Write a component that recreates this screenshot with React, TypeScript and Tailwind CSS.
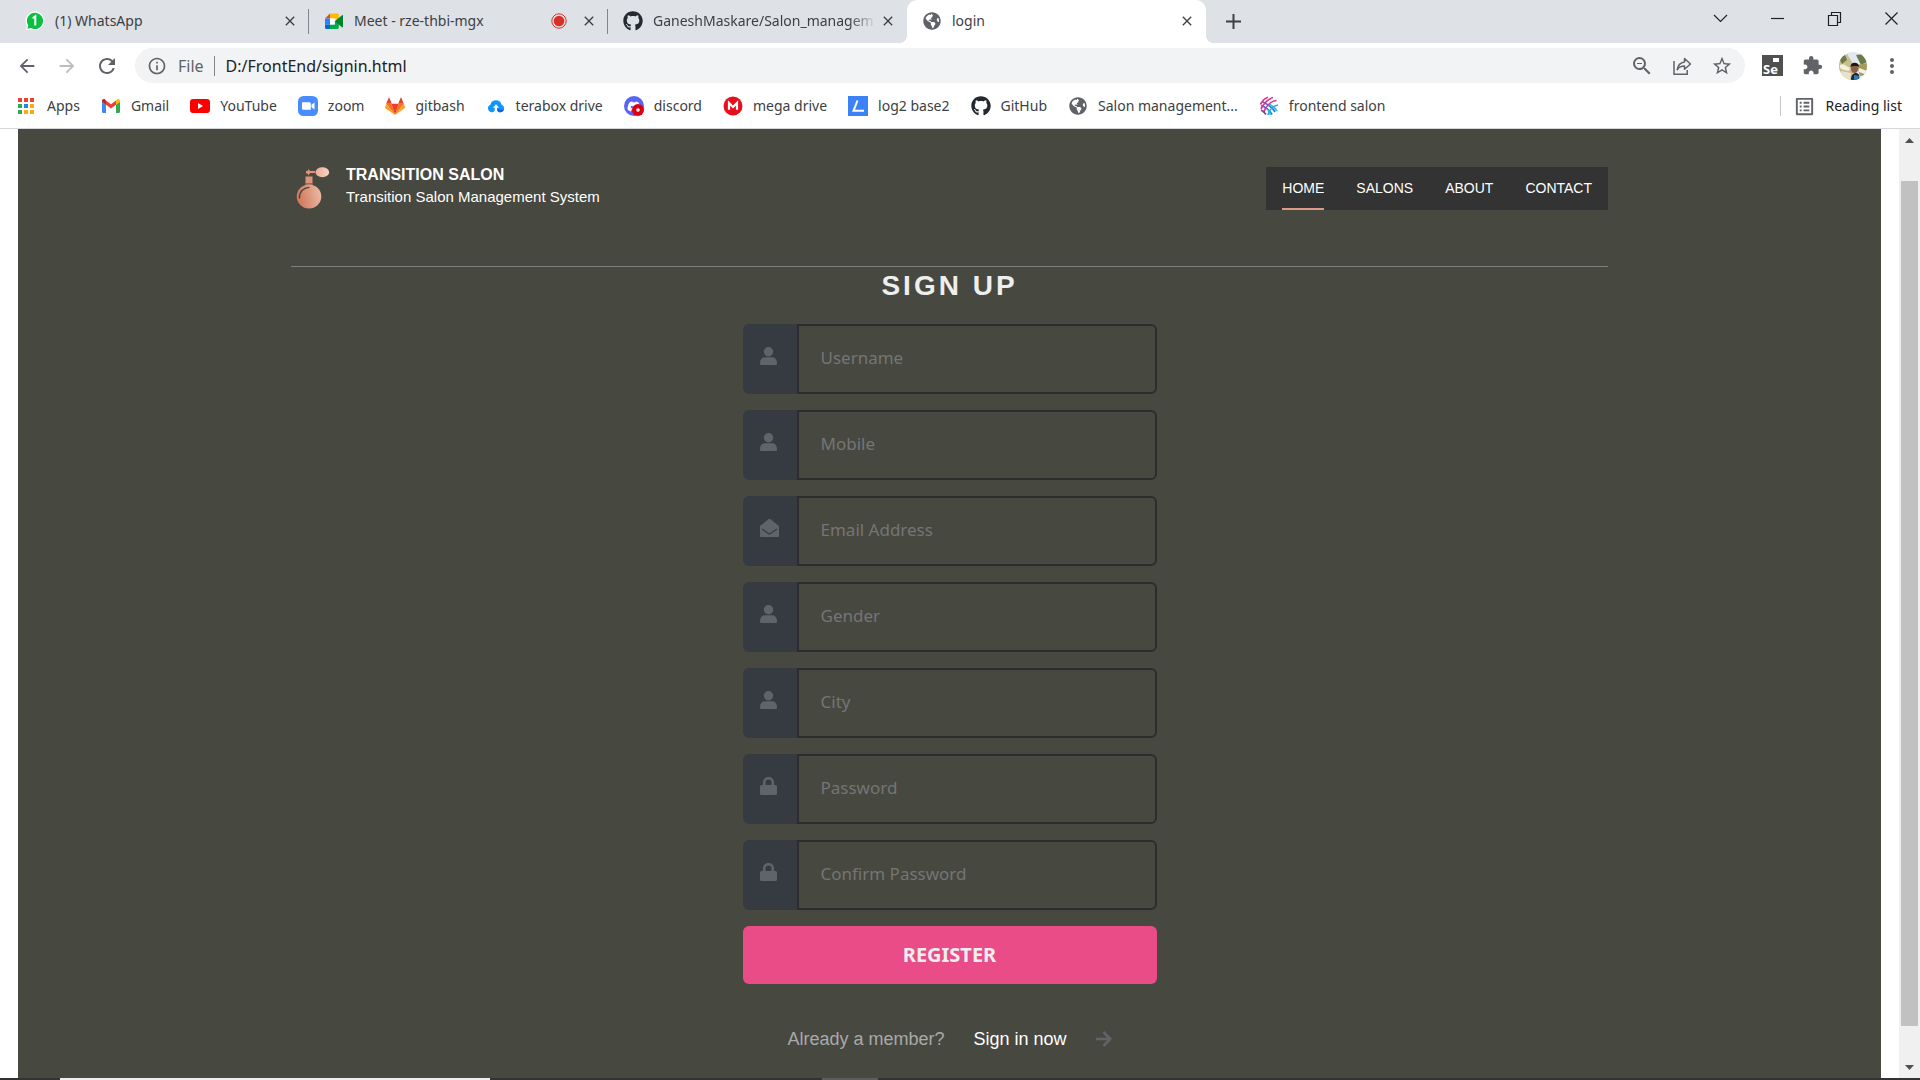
import type { ReactNode } from "react";
import {
  MdArrowBack,
  MdArrowForward,
  MdClose,
  MdExtension,
  MdInfoOutline,
  MdMoreVert,
  MdOutlineListAlt,
  MdRefresh,
  MdStarBorder,
  MdZoomOut,
} from "react-icons/md";
import { FaDiscord, FaGithub, FaGlobeAmericas } from "react-icons/fa";

/* ---------- favicons ---------- */

const WhatsAppIcon = () => (
  <svg viewBox="0 0 20 20" className="size-5">
    <path d="M10 .5a9.4 9.4 0 1 1-4.300 17.800L.6 19.600l1.300-4.900A9.400 9.400 0 0 1 10 .5z" fill="#fff" />
    <path d="M10 1.800a8.100 8.100 0 1 1-4.100 15.100l-3.500.9.900-3.400A8.100 8.100 0 0 1 10 1.800z" fill="#0cbf42" />
    <path d="M7.600 7.200 10.300 5.200v9.300" fill="none" stroke="#fff" strokeWidth="2" />
  </svg>
);

const MeetIcon = () => (
  <svg viewBox="0 0 20 20" className="size-5">
    <path d="M1 7.500 6 2.500v5z" fill="#ea4335" />
    <path d="M1 7.500h5v6H1z" fill="#2684fc" />
    <path d="M1 13.500h5v4.500H2.200C1.500 18 1 17.500 1 16.800z" fill="#0066da" />
    <path d="M6 2.500h7.500c.8 0 1.300.5 1.300 1.200V10l-4-2.500H6z" fill="#ffba00" />
    <path d="M6 13.500h4.800V10l4 0v6.800c0 .7-.5 1.200-1.300 1.200H6z" fill="#00ac47" />
    <path d="M10.800 10.200 18 4.200c.5-.4 1-.1 1 .5v11c0 .6-.5.900-1 .5z" fill="#00832d" />
    <path d="M6 7.500h4.800v6H6z" fill="#fff" />
  </svg>
);

const AppsIcon = () => {
  const colors = ["#ea4335", "#ea4335", "#ea4335", "#34a853", "#1e88e5", "#fbab05", "#34a853", "#fbab05", "#fbab05"];
  return (
    <svg viewBox="0 0 20 20" className="size-5">
      {colors.map((c, i) => (
        <rect key={i} x={1 + (i % 3) * 6} y={2 + Math.floor(i / 3) * 6} width="4" height="4" fill={c} />
      ))}
    </svg>
  );
};

const GmailIcon = () => (
  <svg viewBox="0 0 20 20" className="size-5">
    <path d="M1 5.500v10.300c0 .7.500 1.200 1.200 1.200H5V8.500z" fill="#4285f4" />
    <path d="M15 17h2.800c.7 0 1.200-.5 1.200-1.200V5.500l-4 3z" fill="#34a853" />
    <path d="M15 4.500v4.300l4-3V4.700c0-1.500-1.700-2.300-2.900-1.400z" fill="#fbbc04" />
    <path d="M5 8.800V4.500l5 3.800 5-3.800v4.300l-5 3.800z" fill="#ea4335" />
    <path d="M1 4.700v1.100l4 3V4.500L3.900 3.300C2.700 2.400 1 3.200 1 4.700z" fill="#c5221f" />
  </svg>
);

const YouTubeIcon = () => (
  <svg viewBox="0 0 20 20" className="size-5">
    <rect y="3" width="20" height="14" rx="3" fill="#f00" />
    <path d="M8 7v6l5-3z" fill="#fff" />
  </svg>
);

const ZoomIcon = () => (
  <svg viewBox="0 0 20 20" className="size-5">
    <rect width="20" height="20" rx="5.500" fill="#4a8cff" />
    <path d="M4 6.200h7.400c.8 0 1.400.6 1.400 1.400v6.200H5.400C4.600 13.800 4 13.200 4 12.400zM13.500 8.800 16.500 6.500v7l-3-2.300z" fill="#fff" />
  </svg>
);

const GitLabIcon = () => (
  <svg viewBox="0 0 20 20" className="size-5">
    <path d="M4 1 1.200 7.800h5.600zM16 1l2.800 6.800h-5.600z" fill="#e24329" />
    <path d="M10 19 6.400 7.800h7.200z" fill="#e24329" />
    <path d="M10 19 1.200 7.800h5.400zM10 19l8.800-11.200h-5.400z" fill="#fc6d26" />
    <path d="M1.200 7.800 0 11.300c-.1.400 0 .8.300 1L10 19zM18.800 7.800l1.200 3.500c.1.400 0 .8-.3 1L10 19z" fill="#fca326" />
  </svg>
);

const TeraboxIcon = () => (
  <svg viewBox="0 0 20 20" className="size-5">
    <path
      d="M5.800 16.300a3.900 3.900 0 0 1-1.400-7.500 5.700 5.700 0 0 1 11.200 0 3.900 3.900 0 0 1-1.400 7.500c-1.500 0-2.700-.9-3-2.300v-2.300h1.800L10 8.300l-3 3.400h1.800V14c-.3 1.400-1.500 2.300-3 2.300z"
      fill="#1296fb"
    />
    <path d="M11.200 12v2c.3 1.400 1.500 2.300 3 2.300a3.900 3.900 0 0 0 3.800-3.300c-2 1.200-4.500 1-6.800-1z" fill="#0a63e8" />
  </svg>
);

const DiscordIcon = () => (
  <svg viewBox="0 0 20 20" className="size-5">
    <circle cx="10" cy="10" r="10" fill="#5865f2" />
    <FaDiscord x="3" y="3.500" width="14" height="13" color="#fff" />
    <circle cx="14" cy="14" r="6" fill="#dd0010" />
    <circle cx="14" cy="14" r="1.800" fill="#fff" />
  </svg>
);

const MegaIcon = () => (
  <svg viewBox="0 0 20 20" className="size-5">
    <circle cx="10" cy="10" r="9.500" fill="#e5101c" />
    <path d="M6 13.800V7l4 4 4-4v6.800" fill="none" stroke="#fff" strokeWidth="2.200" />
  </svg>
);

const Log2Icon = () => (
  <svg viewBox="0 0 20 20" className="size-5">
    <rect width="20" height="20" fill="#3b82f6" />
    <path d="M9.500 4.500 5.500 14.800h10.500" fill="none" stroke="#fff" strokeWidth="2" />
  </svg>
);

const FrontendIcon = () => (
  <svg viewBox="0 0 20 20" className="size-5" fill="none" strokeWidth="1.700">
    <path d="M3 5.500C7 7 14 12 16 16M2 9.500c4 1 9 5 11 9" stroke="#2b7fd0" />
    <path d="M10 8c3 1.500 6.500 4.500 8 7M9 14c1 1.200 2 3 2.500 5" stroke="#31c0ee" />
    <path d="M2 13C5 7 9 3 14 1.500M4.500 16.500C7 10 12 5 17.500 4.500" stroke="#e0338b" />
    <path d="M9 19c1-5 5-9 10-10" stroke="#31a9e0" />
    <path d="M1.500 8.500C3 5 5.500 2.500 9 1.200" stroke="#e0338b" />
    <path d="M2 14c2 1 4 2.500 5 4.500" stroke="#7a3fa8" />
  </svg>
);

const GlobeIcon = () => <FaGlobeAmericas className="size-5 p-px text-[#5f6368]" />;
const GitHubIcon = () => <FaGithub className="size-5 text-[#24292f]" />;

/* ---------- browser chrome ---------- */

type TabProps = { title: string; icon: ReactNode; active?: boolean; divider?: boolean; recording?: boolean; fade?: boolean };

function Tab({ title, icon, active, divider, recording, fade }: TabProps) {
  return (
    <div
      className={`relative flex h-[43px] w-[299px] shrink-0 items-center pr-[11px] pb-px pl-[15px] ${
        active ? "rounded-t-[10px] bg-white" : ""
      }`}
    >
      {icon}
      <button
        type="button"
        className={`ml-[10px] min-w-0 flex-1 text-left whitespace-nowrap text-[#3c4043] ${
          fade ? "[mask-image:linear-gradient(to_right,black_88%,transparent)]" : ""
        }`}
      >
        {title}
      </button>
      {recording && (
        <svg viewBox="0 0 16 16" className="mr-[10px] size-4">
          <circle cx="8" cy="8" r="7.200" fill="none" stroke="#d93025" />
          <circle cx="8" cy="8" r="5.300" fill="#d93025" />
        </svg>
      )}
      <button type="button" aria-label={`Close ${title}`} className="ml-1">
        <MdClose className="size-4 text-[#3c4043]" />
      </button>
      {divider && <span className="absolute right-0 h-[25px] w-px bg-[#80868b]" />}
      {active && (
        <>
          <span className="absolute bottom-0 -left-2 size-2 bg-[radial-gradient(circle_at_0_0,#dee1e6_8px,white_8px)]" />
          <span className="absolute -right-2 bottom-0 size-2 bg-[radial-gradient(circle_at_100%_0,#dee1e6_8px,white_8px)]" />
        </>
      )}
    </div>
  );
}

function WindowControls() {
  const items: [string, string][] = [
    ["Search tabs", "M1 4 7.500 10.500 14 4"],
    ["Minimize", "M1 7.500h13"],
    ["Restore", "M1.500 4.500h9v10h-9zM4.500 4.500v-3h9v10h-3"],
    ["Close window", "M1.500 1.500l12 12M13.500 1.500l-12 12"],
  ];
  return (
    <div className="ml-auto flex h-[37px] items-center gap-[42px] pr-[21px]">
      {items.map(([label, d]) => (
        <button key={label} type="button" aria-label={label}>
          <svg viewBox="0 0 15 15" className="size-[15px]" fill="none" stroke="#202124" strokeWidth="1.200">
            <path d={d} />
          </svg>
        </button>
      ))}
    </div>
  );
}

function TabStrip() {
  return (
    <div className="flex bg-[#dee1e6] pl-[10px] text-sm">
      <Tab title="(1) WhatsApp" icon={<WhatsAppIcon />} divider />
      <Tab title="Meet - rze-thbi-mgx" icon={<MeetIcon />} divider recording />
      <Tab title="GaneshMaskare/Salon_managem" icon={<GitHubIcon />} fade />
      <Tab title="login" icon={<GlobeIcon />} active />
      <button type="button" aria-label="New tab" className="ml-5">
        <svg viewBox="0 0 15 15" className="size-[15px]" stroke="#3c4043" strokeWidth="2">
          <path d="M7.500 0v15M0 7.500h15" />
        </svg>
      </button>
      <WindowControls />
    </div>
  );
}

function Avatar() {
  return (
    <svg viewBox="0 0 28 28" className="size-7">
      <defs>
        <clipPath id="avatar-clip">
          <circle cx="14" cy="14" r="14" />
        </clipPath>
      </defs>
      <g clipPath="url(#avatar-clip)">
        <rect width="28" height="28" fill="#dfe9ee" />
        <path d="M0 8 8 2l5 8 3 5-4 13H0z" fill="#c9bf8e" />
        <path d="M1 13c3-2 6 1 10 3l-1 3c-4-1-6-1-9-3z" fill="#f3efe2" />
        <path d="M0 6l6-3 2 5-5 4zM17 3l8-1 3 8-6 3z" fill="#6d7b48" />
        <path d="M18 13l10-2v12l-7 1z" fill="#a99a5c" />
        <path d="M20 16l8 3v4l-8-3z" fill="#f1f1ea" />
        <path d="M2 19l10 2-1 7H2z" fill="#e6e2cf" />
        <path d="M12 28c0-5 2-7 5-7s4 3 3 7z" fill="#20252e" />
        <path d="M15 23l5 1-1 4h-4z" fill="#2f7fb8" />
        <ellipse cx="15.500" cy="16.500" rx="3.500" ry="4.500" fill="#8d5f43" />
        <path d="M11.500 15c-.5-5 8.500-6 8.500 0l-2-1h-4.500z" fill="#1c1715" />
      </g>
    </svg>
  );
}

function Toolbar() {
  return (
    <div className="flex h-[45px] items-center bg-white pr-4 pl-4 text-[#5f6368]">
      <button type="button" aria-label="Back">
        <MdArrowBack className="size-[22px]" />
      </button>
      <button type="button" aria-label="Forward" className="ml-[18px] text-[#babcbe]">
        <MdArrowForward className="size-[22px]" />
      </button>
      <button type="button" aria-label="Reload" className="ml-[17px]">
        <MdRefresh className="size-6" />
      </button>
      <div className="ml-4 flex h-[35px] min-w-0 flex-1 items-center rounded-full bg-[#f1f3f4] pr-3 pl-3">
        <MdInfoOutline className="size-5" />
        <span className="ml-[11px] text-base">File</span>
        <span className="ml-2.5 h-5 w-px bg-[#80868b]" />
        <input
          aria-label="Address"
          defaultValue="D:/FrontEnd/signin.html"
          className="ml-[11px] min-w-0 flex-1 bg-transparent text-base text-[#202124] outline-none"
        />
        <button type="button" aria-label="Zoom">
          <MdZoomOut className="size-6" />
        </button>
        <button type="button" aria-label="Share" className="ml-[18px]">
          <svg viewBox="0 0 20 20" className="size-5" fill="none" stroke="currentColor" strokeWidth="1.500">
            <path d="M2 5v13.200h13.200V14" />
            <path d="M12.500 2.500 18.500 8l-6 5.300v-3.200c-3.500 0-5.500 1-7.300 3.600.6-4.400 3-7.200 7.300-7.800z" strokeLinejoin="round" />
          </svg>
        </button>
        <button type="button" aria-label="Bookmark this page" className="ml-[19px]">
          <MdStarBorder className="size-[22px]" />
        </button>
      </div>
      <button
        type="button"
        aria-label="Selenium IDE"
        className="ml-[17px] flex size-[21px] flex-col items-start justify-between bg-[#505050] pt-[3px] text-white"
      >
        <span className="mr-1 ml-auto h-1 w-[6px] bg-white" />
        <span className="pl-px text-[13px] leading-[14px] font-bold">Se</span>
      </button>
      <button type="button" aria-label="Extensions" className="ml-[19px]">
        <MdExtension className="size-[21px]" />
      </button>
      <button type="button" aria-label="Profile" className="ml-4">
        <Avatar />
      </button>
      <button type="button" aria-label="Menu" className="ml-[13px]">
        <MdMoreVert className="size-6" />
      </button>
    </div>
  );
}

const bookmarks: [string, () => ReactNode][] = [
  ["Apps", AppsIcon],
  ["Gmail", GmailIcon],
  ["YouTube", YouTubeIcon],
  ["zoom", ZoomIcon],
  ["gitbash", GitLabIcon],
  ["terabox drive", TeraboxIcon],
  ["discord", DiscordIcon],
  ["mega drive", MegaIcon],
  ["log2 base2", Log2Icon],
  ["GitHub", GitHubIcon],
  ["Salon management...", GlobeIcon],
  ["frontend salon", FrontendIcon],
];

function BookmarksBar() {
  return (
    <div className="flex h-[41px] items-center border-b border-[#d5d7da] bg-white pr-[18px] pb-1 pl-[17px] text-sm text-[#3c4043]">
      <nav aria-label="Bookmarks" className="flex items-center gap-[21px]">
        {bookmarks.map(([name, Icon]) => (
          <a key={name} href="#" className="flex items-center gap-[10px] whitespace-nowrap">
            <Icon />
            {name}
          </a>
        ))}
      </nav>
      <span className="ml-auto h-5 w-px bg-[#c4c7ca]" />
      <button type="button" className="ml-3 flex items-center gap-[9px] whitespace-nowrap text-[#202124]">
        <MdOutlineListAlt className="size-[23px] text-[#5f6368]" />
        Reading list
      </button>
    </div>
  );
}

function Scrollbar() {
  return (
    <div className="flex w-[21px] shrink-0 flex-col bg-[#f0f0f0]">
      <button type="button" aria-label="Scroll up" className="flex h-[22px] items-center justify-center">
        <svg viewBox="0 0 9 5" className="h-[5px] w-[9px]" fill="#505050">
          <path d="M0 5 4.500 0 9 5z" />
        </svg>
      </button>
      <div className="flex flex-1 px-0.5 py-[30px]">
        <div className="flex-1 bg-[#c1c1c1]" />
      </div>
      <button type="button" aria-label="Scroll down" className="flex h-[22px] items-center justify-center">
        <svg viewBox="0 0 9 5" className="h-[5px] w-[9px]" fill="#505050">
          <path d="M0 0h9L4.500 5z" />
        </svg>
      </button>
    </div>
  );
}

/* ---------- page ---------- */

function Logo() {
  return (
    <svg viewBox="0 0 34 42" className="h-[42px] w-[34px]">
      <defs>
        <linearGradient id="bottle" x1="0" x2="1" y1="0.600" y2="0.400">
          <stop offset="0" stopColor="#cd7458" />
          <stop offset="1" stopColor="#ecb9a3" />
        </linearGradient>
        <linearGradient id="bulb">
          <stop offset="0" stopColor="#e9ab96" />
          <stop offset="1" stopColor="#f7d3c6" />
        </linearGradient>
      </defs>
      <ellipse cx="13" cy="29.500" rx="12.300" ry="12" fill="url(#bottle)" />
      <path d="M3.500 31c-.5-6 4-10.300 9.500-10.700" fill="none" stroke="#474840" strokeWidth="1.300" strokeLinecap="round" />
      <path d="M9.500 9.500h7v6.500h-7z" fill="#df9379" />
      <path d="M9.200 17h7.600" stroke="#df9379" strokeWidth="1" />
      <path d="M12.500 2l1.500 2h5v2h-5l-1.500 2.500-1-2H10V4h1.500z" fill="#df9379" />
      <ellipse cx="26.300" cy="5.200" rx="6.800" ry="5" fill="url(#bulb)" />
    </svg>
  );
}

function Header() {
  const links = ["HOME", "SALONS", "ABOUT", "CONTACT"];
  return (
    <header className="flex items-start justify-between border-b border-[#7f7f79] pt-[38px] pb-14">
      <a href="#" className="flex items-start gap-4 pl-[5px] text-white">
        <Logo />
        <span className="flex flex-col gap-[6px]">
          <strong className="text-base leading-none">TRANSITION SALON</strong>
          <span className="text-[15px] leading-none">Transition Salon Management System</span>
        </span>
      </a>
      <nav aria-label="Main" className="flex h-[43px] gap-8 bg-[#333] px-4 text-sm text-white">
        {links.map((name, i) => (
          <a
            key={name}
            href="#"
            className={`pt-[11px] leading-5 ${i === 0 ? "border-b-2 border-[#dd9a84]" : ""}`}
          >
            {name}
          </a>
        ))}
      </nav>
    </header>
  );
}

const iconProps = (label: string) => ({
  role: "img",
  "aria-label": label,
  viewBox: "0 0 19 18",
  className: "h-[18px] w-[19px]",
  fill: "currentColor",
});

type FieldIconProps = { label: string };

const UserIcon = ({ label }: FieldIconProps) => (
  <svg {...iconProps(label)}>
    <circle cx="8.500" cy="4.700" r="4.700" />
    <path d="M0 16.500c0-4 1.800-6.300 5-6.300h7c3.200 0 5 2.300 5 6.300 0 1-.5 1.500-1.300 1.500H1.300C.5 18 0 17.500 0 16.500z" />
  </svg>
);

const MailIcon = ({ label }: FieldIconProps) => (
  <svg {...iconProps(label)}>
    <path d="M0 7 8.500.3c.6-.4 1.400-.4 2 0L19 7v9.500c0 1-.5 1.500-1.300 1.500H1.300C.5 18 0 17.500 0 16.500z" />
    <path d="M2 10l6.200 4.300c.8.6 1.800.6 2.600 0L17 10" fill="none" stroke="#363b41" strokeWidth="1.200" />
  </svg>
);

const LockIcon = ({ label }: FieldIconProps) => (
  <svg {...iconProps(label)}>
    <path d="M4.200 9V5.500a4.300 4.300 0 0 1 8.600 0V9" fill="none" stroke="currentColor" strokeWidth="2.600" />
    <rect y="8" width="17" height="10" rx="1.600" />
  </svg>
);

const fields: [string, string, string, (p: FieldIconProps) => ReactNode][] = [
  ["username", "Username", "text", UserIcon],
  ["mobile", "Mobile", "text", UserIcon],
  ["email", "Email Address", "email", MailIcon],
  ["gender", "Gender", "text", UserIcon],
  ["city", "City", "text", UserIcon],
  ["password", "Password", "password", LockIcon],
  ["confirm-password", "Confirm Password", "password", LockIcon],
];

function SignUpForm() {
  return (
    <form className="mx-auto mt-[19px] flex w-full max-w-[414px] flex-col gap-4" onSubmit={(e) => e.preventDefault()}>
      {fields.map(([id, label, type, Icon]) => (
        <div key={id} className="flex h-[70px]">
          <label
            htmlFor={id}
            className="flex w-[54px] shrink-0 items-center rounded-l-md bg-[#363b41] pb-[6px] pl-[17px] text-[#606468]"
          >
            <Icon label={label} />
          </label>
          <input
            id={id}
            type={type}
            placeholder={label}
            className="min-w-0 flex-1 rounded-r-md border-2 border-[#2e2b2f] bg-transparent px-[22px] pb-0.5 text-[17px] text-[#eee] placeholder:text-[#757575]"
          />
        </div>
      ))}
      <button type="submit" className="h-[58px] rounded-md bg-[#ea4c88] text-xl font-bold text-[#eee]">
        REGISTER
      </button>
    </form>
  );
}

function Page() {
  return (
    <main className="ml-[18px] min-w-0 flex-1 overflow-hidden bg-[#474840] font-['Liberation_Sans',sans-serif]">
      <div className="mx-auto max-w-[1317px]">
        <Header />
        <h1 className="text-center text-[28px] leading-[38px] font-bold tracking-[3px] text-[#eee]">SIGN UP</h1>
        <div className="font-['Noto_Sans',sans-serif]">
          <SignUpForm />
        </div>
        <p className="mt-[41px] flex items-center justify-center text-lg text-[#a9a9a9]">
          Already a member?
          <a href="#" className="ml-[29px] flex items-center text-white">
            Sign in now
            <svg viewBox="0 0 16 16" className="ml-[29px] size-4" fill="none" stroke="#606468" strokeWidth="2.600">
              <path d="M0 8h14M7.500 1l6.700 7-6.700 7" />
            </svg>
          </a>
        </p>
      </div>
    </main>
  );
}

export default function App() {
  return (
    <div className="flex h-screen flex-col overflow-hidden bg-white font-['Noto_Sans',sans-serif]">
      <TabStrip />
      <Toolbar />
      <BookmarksBar />
      <div className="flex min-h-0 flex-1">
        <Page />
        <div className="w-[18px] shrink-0" />
        <Scrollbar />
      </div>
      <footer className="flex h-0.5 shrink-0 bg-[#333]">
        <div className="ml-[60px] w-[430px] bg-[#eee]" />
        <div className="ml-[332px] w-14 bg-[#5c5c5c]" />
      </footer>
    </div>
  );
}
